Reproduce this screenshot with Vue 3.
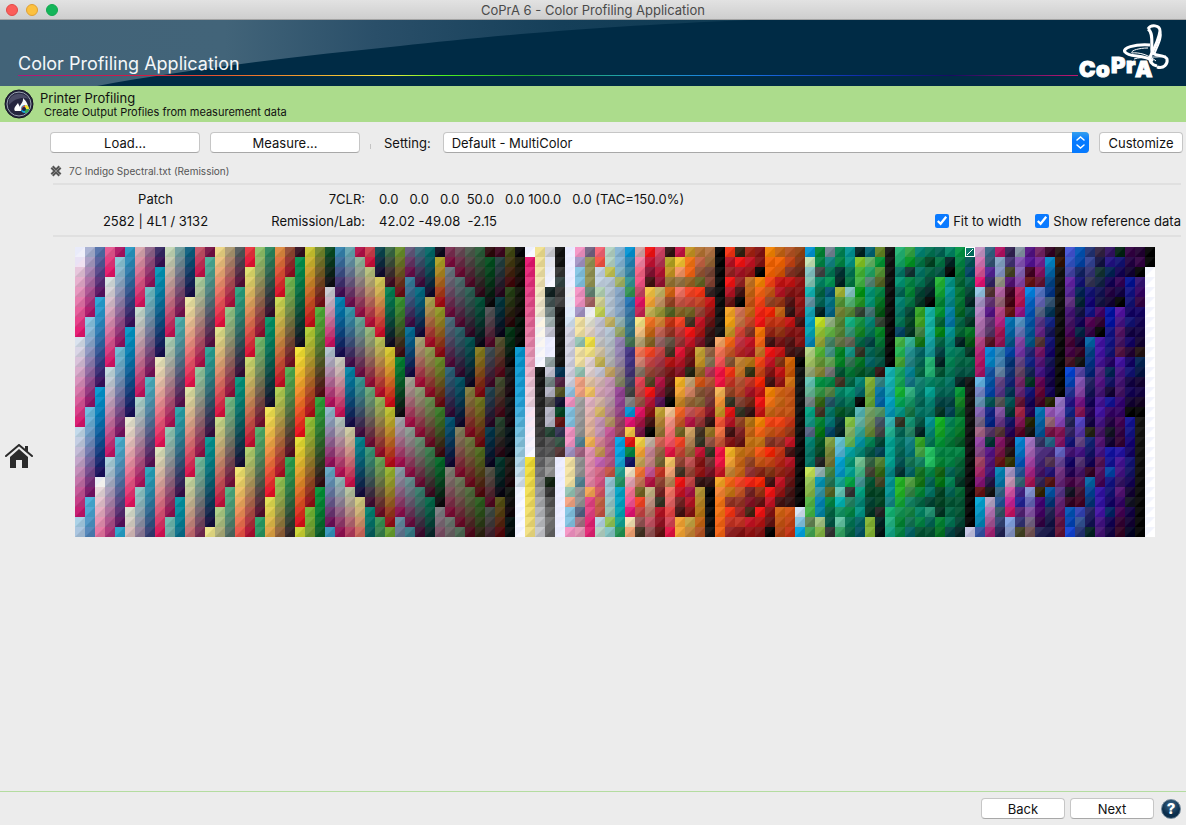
<template>
  <div class="window">
    <header class="title-bar">
      <div class="lights">
        <button class="light red" aria-label="Close"></button>
        <button class="light yellow" aria-label="Minimize"></button>
        <button class="light green" aria-label="Zoom"></button>
      </div>
      <span class="window-title">CoPrA 6 - Color Profiling Application</span>
    </header>

    <div class="banner">
      <svg class="swoosh" viewBox="0 0 750 66" preserveAspectRatio="none" aria-hidden="true">
        <defs>
          <linearGradient id="swoosh" x1="0" x2="1" y1="0" y2="0">
            <stop offset="0" stop-color="#426378" />
            <stop offset="0.3" stop-color="#426479" />
            <stop offset="0.5" stop-color="#2a4f69" />
            <stop offset="0.75" stop-color="#153f59" />
            <stop offset="1" stop-color="#0e3a52" />
          </linearGradient>
        </defs>
        <path d="M0 0H750C600 6 490 16 400 26C300 36 190 49 97 66H0Z" fill="url(#swoosh)" />
      </svg>
      <h1>Color Profiling Application</h1>
      <div class="spectrum"></div>
      <svg class="logo" viewBox="0 0 92 56" width="92" height="56" aria-label="CoPrA">
        <g fill="none" stroke="#fff">
          <path d="M70 5C73 0 82 1 82 7C81 15 77 23 73 31C70 37 74 41 79 42" stroke-width="3" />
          <path d="M70 5C76 9 73 21 74 28C76 33 87 30 89 35C90 40 86 45 79 43" stroke-width="3" />
          <path d="M82 7C85 14 78 24 76 31" stroke-width="2" />
          <path d="M72 21C56 20 44 24 47 28C51 34 65 30 75 37" stroke-width="3" />
          <path d="M70 24C60 24 52 27 54 29C61 28 71 31 78 37" stroke-width="1" />
          <path d="M56 35C65 32 79 34 88 32" stroke-width="1" />
        </g>
        <g class="logo-text">
          <text x="1" y="53">C</text>
          <text x="18" y="53">o</text>
          <text x="33" y="49">P</text>
          <text x="48" y="49">r</text>
          <text x="57" y="53">A</text>
        </g>
      </svg>
    </div>

    <div class="module">
      <svg class="module-icon" viewBox="0 0 30 30" width="30" height="30" aria-hidden="true">
        <circle cx="15" cy="15" r="14" fill="#25253f" stroke="#151525" stroke-width="1" />
        <circle cx="15" cy="15" r="12" fill="none" stroke="#9aa3b0" stroke-width="1" />
        <path d="M5 11C9 3 20 3 25 10C19 8 11 9 5 16Z" fill="#4a4b65" />
        <path d="M11 22C9 19 12 17 14 14C15 17 17 18 17 22Z" fill="#fff" />
        <path d="M16 21C14 16 20 14 19 9C22 12 26 17 23 21Z" fill="#f4f6f8" />
        <circle cx="21" cy="20" r="4" fill="#18a8dc" />
        <path d="M21 16A4 4 0 0 1 25 20H21Z" fill="#f5e32d" />
        <path d="M25 20A4 4 0 0 1 21 24V20Z" fill="#36a852" />
        <path d="M18 18L21 16V20L17 21Z" fill="#e5503c" />
        <circle cx="20" cy="20" r="2" fill="#1c2448" />
      </svg>
      <div class="module-text">
        <h2>Printer Profiling</h2>
        <p>Create Output Profiles from measurement data</p>
      </div>
    </div>

    <div class="body">
      <nav class="rail">
        <a href="#" aria-label="Home">
          <svg viewBox="0 0 28 25" width="28" height="25">
            <path d="M5 13L14 5L23 13V24H17V16H11V24H5Z" fill="#2b2b2b" />
            <path d="M1 12L14 1L27 12" fill="none" stroke="#2b2b2b" stroke-width="2" stroke-linecap="round" />
            <path d="M20 2H23V8L20 6Z" fill="#2b2b2b" />
          </svg>
        </a>
      </nav>

      <main>
        <div class="toolbar">
          <button class="push wide">Load...</button>
          <button class="push wide">Measure...</button>
          <span class="tick"></span>
          <label for="setting">Setting:</label>
          <div class="popup">
            <select id="setting">
              <option>Default - MultiColor</option>
            </select>
            <span class="arrows">
              <svg viewBox="0 0 17 21" width="17" height="21" aria-hidden="true">
                <path d="M5 8L8.500 5L12 8M5 13L8.500 16L12 13" fill="none" stroke="#fff" stroke-width="1.500" stroke-linecap="round" />
              </svg>
            </span>
          </div>
          <button class="push customize">Customize</button>
        </div>

        <div class="file">
          <button class="remove" aria-label="Remove">
            <svg viewBox="0 0 12 12" width="12" height="12">
              <path d="M2 2L10 10M10 2L2 10" stroke="#555" stroke-width="4" />
              <path d="M2 2L10 10M10 2L2 10" stroke="#8a8a8a" stroke-width="1" />
            </svg>
          </button>
          <span>7C Indigo Spectral.txt (Remission)</span>
        </div>

        <div class="info">
          <div class="patch">
            <div>Patch</div>
            <div>{{ patch }}</div>
          </div>
          <div class="labels">
            <div>7CLR:</div>
            <div>Remission/Lab:</div>
          </div>
          <div class="values">
            <div>{{ device }}</div>
            <div>{{ lab }}</div>
          </div>
          <div class="checks">
            <label><input v-model="fit" type="checkbox" />Fit to width</label>
            <label><input v-model="showReference" type="checkbox" />Show reference data</label>
          </div>
        </div>

        <div class="chart">
          <canvas ref="chart" :width="COLS * CELL" :height="ROWS * CELL"></canvas>
        </div>
      </main>
    </div>

    <footer>
      <button class="push nav">Back</button>
      <button class="push nav">Next</button>
      <button class="help" aria-label="Help">?</button>
    </footer>
  </div>
</template>

<script setup>
import { onMounted, ref } from 'vue';

const COLS = 108;
const ROWS = 29;
const CELL = 10;
const SELECTED = 2581;

const fit = ref(true);
const showReference = ref(true);
const chart = ref(null);

const patch = '2582 | 4L1 / 3132';
const device = '0.0   0.0   0.0  50.0   0.0 100.0   0.0 (TAC=150.0%)';
const lab = '42.02 -49.08  -2.15';

// solid overprints, bit 0 = magenta, bit 1 = cyan, bit 2 = yellow
const PRIMARIES = [
  [240, 240, 250], [240, 20, 115], [0, 155, 216], [25, 15, 95],
  [255, 235, 50], [245, 15, 25], [0, 150, 55], [14, 14, 18]
];

// steps per ink and brightness left by the black ink
const CUBES = [[9, 1], [6, 0.87], [5, 0.7], [5, 0.53], [4, 0.34], [3, 0.09]];

// spot colour part, one line per chart column: colour[-colour...][:count]
const COLUMNS = `
122 455 788 abb ccd eef:2 9aa ccd 788 bbc 555 bbc:2 243 555:2 888 999 121 333 555 666 777 666
111:2 333 344 333 444 111:6 035 524 552 113 042 611 335 354 533 eef:8
eef:4 eee-def:4 dde:6 9ce f9c 8ce:2 f9c:2 a9c fea:3 9cb fa8 8ce:2 f9c
f9c a9c 8ce:2 f9c:2 a9c fea:2 9cb fea:2 9cb fa8:2 aaa-999:4 589 a68 999:2 589 999:2 568 a78 e9b
768 995:3 687 a66 eee eed edc fe4 fe8 edd:2 eca fc6 ebc-eb9:4 fb5 e9b-e8a:4 fa5 e48:2 e27
f67 f54 cde:2 bdb dd9 cd5 ccd:2 ccc dca cb5 ccd dbb dab dba db6 c9b:2 d89 c95 c6b d68 d58 d56 c64 c54 bde bdc
bdc:2 cc5 bcd:4 cb6 bcd-bbb:4 ca6 c9b:2 b9a b89 b96 c59 b58:3 c54 9cd:2 9cc 9cb 9c5 8cc
8bd:2 8bc ab6 8ac:3 9bb 9a6 98b:2 98a 988 886 949:2 948 946 945 0ae:2 1ad 2a9 296 0ac:2 0ab 1a9 295
09d 28b 38a 399 395 27b 37a 379 378 475 438:2 437 446 444 888 09d e17 fc4 e11 084 116 fec eab f79 f59 e17 feb fa7
daa f8a f68 f58 c46 e16 c25 fe8 fc8 ba7 f75 d87 876 e45 c44 954 e16 a14 714 fd4 fa3 ca5 f73 c75 762 f42 c44 955 432
f11 c13 813 411 fc4 fa3 cb5 f72 c61 862 f42 c44 943 542 f11 b13 811 411 000 cba c89 c88 c59 b14 cb8 c98 b76 c56 955
d46 b35 b13 913 cb6 c96 993 d83 c65 966 c44 a34 833 b14 813 515 ca3 b83 973 d65 964 763 c32 943 722 332 b12 912 611
311 ba2 c92 973 d61 942 562 c31 932 654 432 b11 711 511 311 000 fc9 f98 f77 f56 e14 fc6 fa7 b85 f76 e66 e44 d45 e14
c14 fc3 f96 974 f76 c54 862 f42 c33 933 e13 b12 812 fb2 fa3 c82 f62 c52 762 f42 c43 943 432 f11 c12 722 411 fa3:2
c92 f71 f61 962 f42 c43 762 432 f11 c12 811 611 221 ca7 d86 963 c55 b14 da6 b85 963 c55 943 c44 a14 b12 811 ca4 c83
b73 c64 953 662 f31 c42 943 c12 a11 712 ca3 c92 962 d51 853 863 c43 933 432 332 c13 811 911 311 b93 b82 b71 c61 b52
b74 963 743 843 322 c11 911 611 311 211 964 875 b35 b53 843 733 812 311 972 954 332 733 712 311 000-111:5
000-111:9 fa6 f75 f55 f14 f14 fb5 f93 c92 f53 f74 c53 f14:2 c12 fa2 f83 f71:2 f61:2 c61:2 c52 b41
f31 b12 922 f11 b12 611 fa2 fa1 c92 f61 c52 853 f31 c32 942 332 e11 b12 411 811 fb2 fa3 c83 f61 c71 932 f31 c32 922
321 f11 a12 922 411 000 d75 c74 d43 c34 b22 c83 c72 b53 b42 843 332 942 822 611 c71 c61:2 f42 c52 932 a22 c32 811
a21 c12 911 c72 c61 c51 c61 c42 832 c12 a12 b71 331 c32 a12 721 311 b71 c61 c71 c61 942 933 f21 722 812 421 c12 911
811:2 000 f80 f61 f41 f21 f11 f70 f61 c72 f41 c41 f20 c11 f11 c11 f80 f61 c71 f51 c51 821 f20 931 611 f11 b11 811
f80 f60:2 f41 c51 942 f20 c31 921 411 f11 c12 811 411 f80 f71 c61 f41 c51 832 f20 c41 831 411 f11 c12 811 611 000
c61 f60 d50 c11 b12 931 c61 c31 931 711 c11 831 c11 911 d61 c61 c51 f41 c41 932 c31 b21 921 c12 911 411 d61 c51 b41
b52 c41 832 c11 811 511 311 c11 811 511 411 d60 c50 d71 c51:3 c31 931 c12 411 b12 811 611 411 311 d51 c41 c31
941 831 621 911 811 911 811 411 811:2 311-000 111-000:14 def 8ce 0ae 6bd
09d ceb 8cc 8cb 1bb 69a 1ab 0ac 0ab 08b bd8 ac6 9a7 6cb 6b9 788 0a8 198 568 087 076:2 ce5 9c5 8b4 5b4 4b4 685 4a5
083 084 444 086 064 065 022 ce2 9c3 9a3 5b3 693 883 094 394 361 432 083 071 052 042 222 9bb 09b 39a 08b 08a ac8 8b4
789 188 075 095 057 078 068 9b8 6b4 486 498 6a5 777 084 584 256 076 077 046 8a4 783 773 484 275 562 084 064 054 333
085 084 033 022 ab3 593 783 583:2 674 082:2 053 432 086 065 052 033 022 6cd 5bd 0ad 09c 1a9 6cb 0bb 196 6ca 3a6
099 098 075 074 8cc 5b7 583 1b8 397 665 198 375 073 064 097 075 053 8c4 8b6 6b5 0aa 097 0a9 0a4 333 286 084 075 064
022 8c2 4b3 4b4 091 292 343 194 182 064 332 072 052 087 066 000 5bb 6ba 3a9 09a 087 7c9 4b8 499 0a8 087 098 066 056
067 6b6 2a6 587 097:2 477 087 075 044 065 066 053 8b3 7a3 6a3 7a6 795 683 085 054 364 443 053 042 043 032 8b3:2
682 093 593 562 084 072 051 343 082 073 053 054 311 388 07a 06a 596 456 444 043 045 583 361 442 042:2 222 022 011
111-000:12 1bb:2 1ab 0ac 09b 3bb 2b9 0a9:3 088 099:2 188 1b7 2b8 1a8
2b7 1a6 076 097 065 087 076 075 046 4b4 2b5 4a3 1a6 1a5 1b3 0a5 098 332 065 076 065 055 033 2b2:2 1a3 195 083 084
3a4 092 133 084 083 074 043 042 032 3b9 299 288 089 178 3b8 196 174 197 286 188 077 175 066 5a4 384 186 184 175 066
087 074 076 075 043 032 3a2 4a2 484 171 066 065 064 187 076 065 076 054 022 3a2 4a4 186 172 171 083 064 086 084 053
075 042 064 043 022 000 1ba:3 1aa 199 2b7:2 086 0a9 087 076 099 087 075 2c6:2 084 065 076 043 297 065 053
065 074 054 2b3 1a3 083 093 063 081 064 044 022 053 075 065 044 032 1b2 1a2 093 084 083 161 071 042:2 032 083 072
086 022 000 098 099 088 08a 07a 099 087 086 085 075 076 065 044 045 085 084 073 084:2 065 085 065 053 064 075 044
094 084 073 063 073:2 062 064 063 022 075 064 054 022 093 182 062 083 072 052 084 063 053 032 063 053:2 043 022
076 055 046 065 043 022 054 032 072 051 032 064 054 111-000:15 cce
c9c d7b d59 e17 9ce a9c b8c b7b a6a b48 b27 b16 a16 6be 78c 69b 86b 768 a68 94a 848 a46 a26 817 611 0ad 09c 08b 35a
368 357 529 326 533 637 518 637 536 512 08d 08c 15a 05a 04a 055 128 028 536 033 518 517 417 214 111 bac b7b a59 a27
b16 8ac 89c 998 b6a 967 b48 b28 a15 915 38b 48b 68a 648 538 555 85a 638 533 816 714 611 08b 07a 368 259 356 347 225
325 437 442 517 402 401 611 07b 06a 058 04a 037 137 127 035 055 033 116 205 302 211 330 a9c c9b d5a c29 c16 8ae 89c
89a 85b 86b 84a b26 b15 918 59c 67b 84a 73a 648 646 726 627 613 a24 815 502 08d 07c 05b 259 367 428 229 527 337 442
518 519 402 611 08e 06c 05b 05a 059 058 227 128 125 032 117 105 205 220 111 a7c a6b a4a a28 a15 89d 66b 85a 768 755
726 729 816 613 57c 66b 568 538 628 533 716 517 418 605 603 402 07b 06a 059 336 538 427 416 325 320 407 406 304 225
302 08c 06a 048 038 357 035 128 115 117 106 115 105 104 105 220 95b 967 714 268 427 535 217 511 05a 037 225 114 114
211 310 111-000:13 97c 96c 84b 815 816 66c 649 738 627 538 627 616 614 613
45d 35c 44a 62a 529 638 417 416 405 403 404 412 04d 04b 239 218 128 225 326 117 417 106 205 404 112 302 05b 04b 14d
05b 04a 126 117 025 023 114 105 024 103 302 111 54a 85b 84a 718 815 54c 53a 648 418 537 416 515 413 402 34b 359 237
237 349 337 335 117 107 118 505 304 06a 048 038 027 226 115 105 205 104 221 127 116 105 302 06a 049 037 226 115 022
324 114 133 124 115 114 406 303 000 41a:2 419 528 518 417 419 41a 418 416 517 418 515 516 405 31a:2 41a 418 417 316
316 218 025 105 204 103 01a 01a 118 118 117 206 025 116 103 119 306 204 112 103 11a 119 04a 118 117 106 026 105 104
021 117 105 305 104 000 51a 418 516 416 514 41a 418 417 416 307 306 405 304 303 21a 419 418 316 517 306 405 303 302
304 204 103 019 118 117 106 117 104 106 203 106 117 104 105 103 000 119 118 107 106 117 116 105 103 112 104 103 002
203 304 000 317 306 304 106 105 104 103 211 025 014 103 104 102 000-111:2 111-000:11
000:2 fff:27`;

function mix(a, b, t) {
  return a.map((v, i) => v + (b[i] - v) * t);
}

function hex(text) {
  return [...text].map(c => parseInt(c, 16) * 17);
}

function inkCube(steps, light) {
  const p = PRIMARIES;
  const out = [];
  for (let y = 0; y < steps; y++) {
    for (let c = 0; c < steps; c++) {
      for (let m = 0; m < steps; m++) {
        const [tm, tc, ty] = [m, c, y].map(v => (v / (steps - 1)) ** 1.3);
        const plain = mix(mix(p[0], p[1], tm), mix(p[2], p[3], tm), tc);
        const yellow = mix(mix(p[4], p[5], tm), mix(p[6], p[7], tm), tc);
        out.push(mix(plain, yellow, ty).map(v => v * light));
      }
    }
  }
  return out;
}

function ramp(stops, count) {
  const out = [];
  for (let i = 0; i < count; i++) {
    const pos = count > 1 ? (i / (count - 1)) * (stops.length - 1) : 0;
    const k = Math.min(Math.floor(pos), Math.max(stops.length - 2, 0));
    out.push(mix(stops[k], stops[k + 1] || stops[k], pos - k));
  }
  return out;
}

function buildPatches() {
  const cells = CUBES.flatMap(([steps, light]) => inkCube(steps, light));
  const white = [248, 248, 255];
  cells.push(...ramp([[0, 155, 216], [30, 170, 230], [150, 210, 235], white, white], 20));
  cells.push(...ramp([PRIMARIES[1], [240, 110, 160], [250, 215, 230], white], 20));
  cells.push(...ramp([[252, 232, 50], [252, 232, 125], [254, 243, 210], white], 20));
  cells.push(...ramp([[15, 15, 15], [60, 60, 60], [180, 182, 186], white], 21));

  COLUMNS.trim().split('\n').forEach((line, i) => {
    const column = line.split(' ').flatMap(token => {
      const [colors, count] = token.split(':');
      const stops = colors.split('-').map(hex);
      return ramp(stops, Number(count) || stops.length);
    });
    const rows = i ? ROWS : ROWS - 4;
    while (column.length < rows) column.push(column[column.length - 1]);
    cells.push(...column.slice(0, rows));
  });
  return cells;
}

function draw() {
  const ctx = chart.value.getContext('2d');
  buildPatches().forEach((color, i) => {
    const x = Math.floor(i / ROWS) * CELL;
    const y = (i % ROWS) * CELL;
    const bright = Math.min(...color) > 225;
    const reference = bright ? mix(color, [222, 228, 250], 0.4) : mix(color, [150, 150, 150], 0.1);
    const measured = bright ? color : color.map(v => v * 0.88);
    ctx.fillStyle = `rgb(${measured.map(Math.round).join(',')})`;
    ctx.fillRect(x, y, CELL, CELL);
    ctx.fillStyle = `rgb(${reference.map(Math.round).join(',')})`;
    ctx.beginPath();
    ctx.moveTo(x, y);
    ctx.lineTo(x + CELL, y);
    ctx.lineTo(x, y + CELL);
    ctx.fill();
  });

  const sx = Math.floor(SELECTED / ROWS) * CELL;
  const sy = (SELECTED % ROWS) * CELL;
  ctx.strokeStyle = '#fff';
  ctx.strokeRect(sx + 0.5, sy + 0.5, CELL - 1, CELL - 1);
  ctx.beginPath();
  ctx.moveTo(sx + 2, sy + 8);
  ctx.lineTo(sx + 8, sy + 2);
  ctx.stroke();
}

onMounted(draw);
</script>

<style>
body {
  margin: 0;
  background: #ececec;
}
</style>

<style scoped>
.window {
  display: flex;
  flex-direction: column;
  min-height: 100vh;
  background: #ececec;
  color: #111;
  font-family: Inter, "Liberation Sans", sans-serif;
  font-size: 13px;
  line-height: 16px;
}

button,
select {
  font: inherit;
  color: inherit;
}

.title-bar {
  display: flex;
  align-items: center;
  height: 19px;
  padding: 0 6px;
  background: linear-gradient(#e2e2e2, #cecece);
  border-bottom: 1px solid #a3a3a3;
}

.lights {
  display: flex;
  flex: 1;
  gap: 8px;
}

.title-bar::after {
  content: "";
  flex: 1;
}

.light {
  width: 12px;
  height: 12px;
  padding: 0;
  border: 1px solid;
  border-radius: 50%;
}

.red {
  background: #fb5d5a;
  border-color: #e24a47;
}

.yellow {
  background: #fcc13f;
  border-color: #e0a032;
}

.green {
  background: #14b559;
  border-color: #12a94f;
}

.window-title {
  color: #4a4a4a;
}

.banner {
  position: relative;
  display: flex;
  align-items: flex-end;
  height: 66px;
  padding: 0 16px 0 18px;
  background: #002b45;
}

.swoosh {
  position: absolute;
  top: 0;
  left: 0;
  width: 750px;
  height: 66px;
}

.banner h1 {
  position: relative;
  flex: 1;
  margin: 0 0 10px;
  color: #f4f7f9;
  font-size: 18px;
  font-weight: 400;
  line-height: 24px;
}

.spectrum {
  position: absolute;
  left: 18px;
  right: 108px;
  bottom: 10px;
  height: 1px;
  background: linear-gradient(90deg, #b01878, #d81840 12%, #e8602c 20%, #f0a030 27%, #f5ee40 35%, #50f020 40%, #20a830 48%, #20a0b8 58%, #1878e8 68%, #1028a8 80%, #180c60 88%, #c01870);
}

.logo {
  position: relative;
  align-self: flex-start;
  margin-top: 4px;
}

.logo-text {
  fill: #fff;
  stroke: #fff;
  stroke-width: 1px;
  font-size: 22px;
  font-weight: 900;
}

.module {
  display: flex;
  align-items: center;
  gap: 5px;
  height: 36px;
  padding: 0 5px;
  background: #acdc8c;
}

.module-icon {
  margin-left: -1px;
  margin-right: 1px;
}

.module h2,
.module p {
  margin: 0;
  font-weight: 400;
}

.module h2 {
  padding-top: 2px;
  font-size: 13px;
  line-height: 15px;
}

.module p {
  padding-left: 4px;
  font-size: 11px;
  line-height: 13px;
}

.body {
  display: flex;
  flex: 1;
}

.rail {
  display: flex;
  align-items: center;
  width: 45px;
  padding-left: 5px;
}

.rail svg {
  display: block;
}

main {
  flex: 1;
  min-width: 0;
}

.toolbar {
  display: flex;
  align-items: center;
  gap: 10px;
  padding: 10px 3px 0 0;
}

.push {
  height: 21px;
  padding: 0 8px;
  background: #fff;
  border: 1px solid #c6c6c6;
  border-bottom-color: #a8a8a8;
  border-radius: 4px;
  line-height: 18px;
}

.wide {
  width: 150px;
}

.nav,
.customize {
  width: 84px;
}

.tick {
  width: 1px;
  height: 5px;
  margin-top: 8px;
  background: #c4c4c4;
}

.toolbar label {
  padding: 0 2px 0 3px;
}

.popup {
  position: relative;
  flex: 1;
  height: 21px;
}

.popup select {
  display: block;
  width: 100%;
  height: 21px;
  padding: 0 24px 0 8px;
  appearance: none;
  background: #fff;
  border: 1px solid #c6c6c6;
  border-bottom-color: #a8a8a8;
  border-radius: 4px;
  line-height: 18px;
}

.arrows {
  position: absolute;
  top: 0;
  right: 0;
  width: 17px;
  height: 21px;
  background: linear-gradient(#35a0ee, #067aff 40%);
  border-radius: 0 4px 4px 0;
  pointer-events: none;
}

.file {
  display: flex;
  align-items: center;
  gap: 7px;
  padding: 10px 0 4px;
  color: #555;
  font-size: 10px;
}

.remove {
  display: flex;
  padding: 0;
  background: none;
  border: 0;
}

.info {
  display: flex;
  margin: 0 5px 0 3px;
  padding: 3px 0;
  border-top: 2px solid #e0e0e0;
  border-bottom: 2px solid #e0e0e0;
  line-height: 22px;
}

.info > div > div {
  white-space: pre;
}

.patch {
  width: 205px;
  text-align: center;
}

.labels {
  width: 107px;
  text-align: right;
}

.values {
  flex: 1;
  padding-left: 14px;
}

.checks {
  display: flex;
  align-items: flex-end;
  gap: 14px;
}

.checks label {
  display: flex;
  align-items: center;
  gap: 4px;
}

.checks input {
  width: 14px;
  height: 14px;
  margin: 0;
  accent-color: #0a7aff;
}

.chart {
  padding: 10px 31px 0 25px;
}

.chart canvas {
  display: block;
  width: 100%;
}

footer {
  display: flex;
  align-items: center;
  justify-content: flex-end;
  gap: 5px;
  height: 33px;
  padding-right: 5px;
  border-top: 1px solid #b4dca0;
}

.help {
  width: 20px;
  height: 20px;
  margin-left: 2px;
  padding: 0;
  background: radial-gradient(circle at 50% 30%, #3d6a8c, #0b2e4c 60%);
  border: 1px solid #6d8496;
  border-radius: 50%;
  color: #fff;
  font-size: 15px;
  font-weight: 800;
  line-height: 16px;
}
</style>
